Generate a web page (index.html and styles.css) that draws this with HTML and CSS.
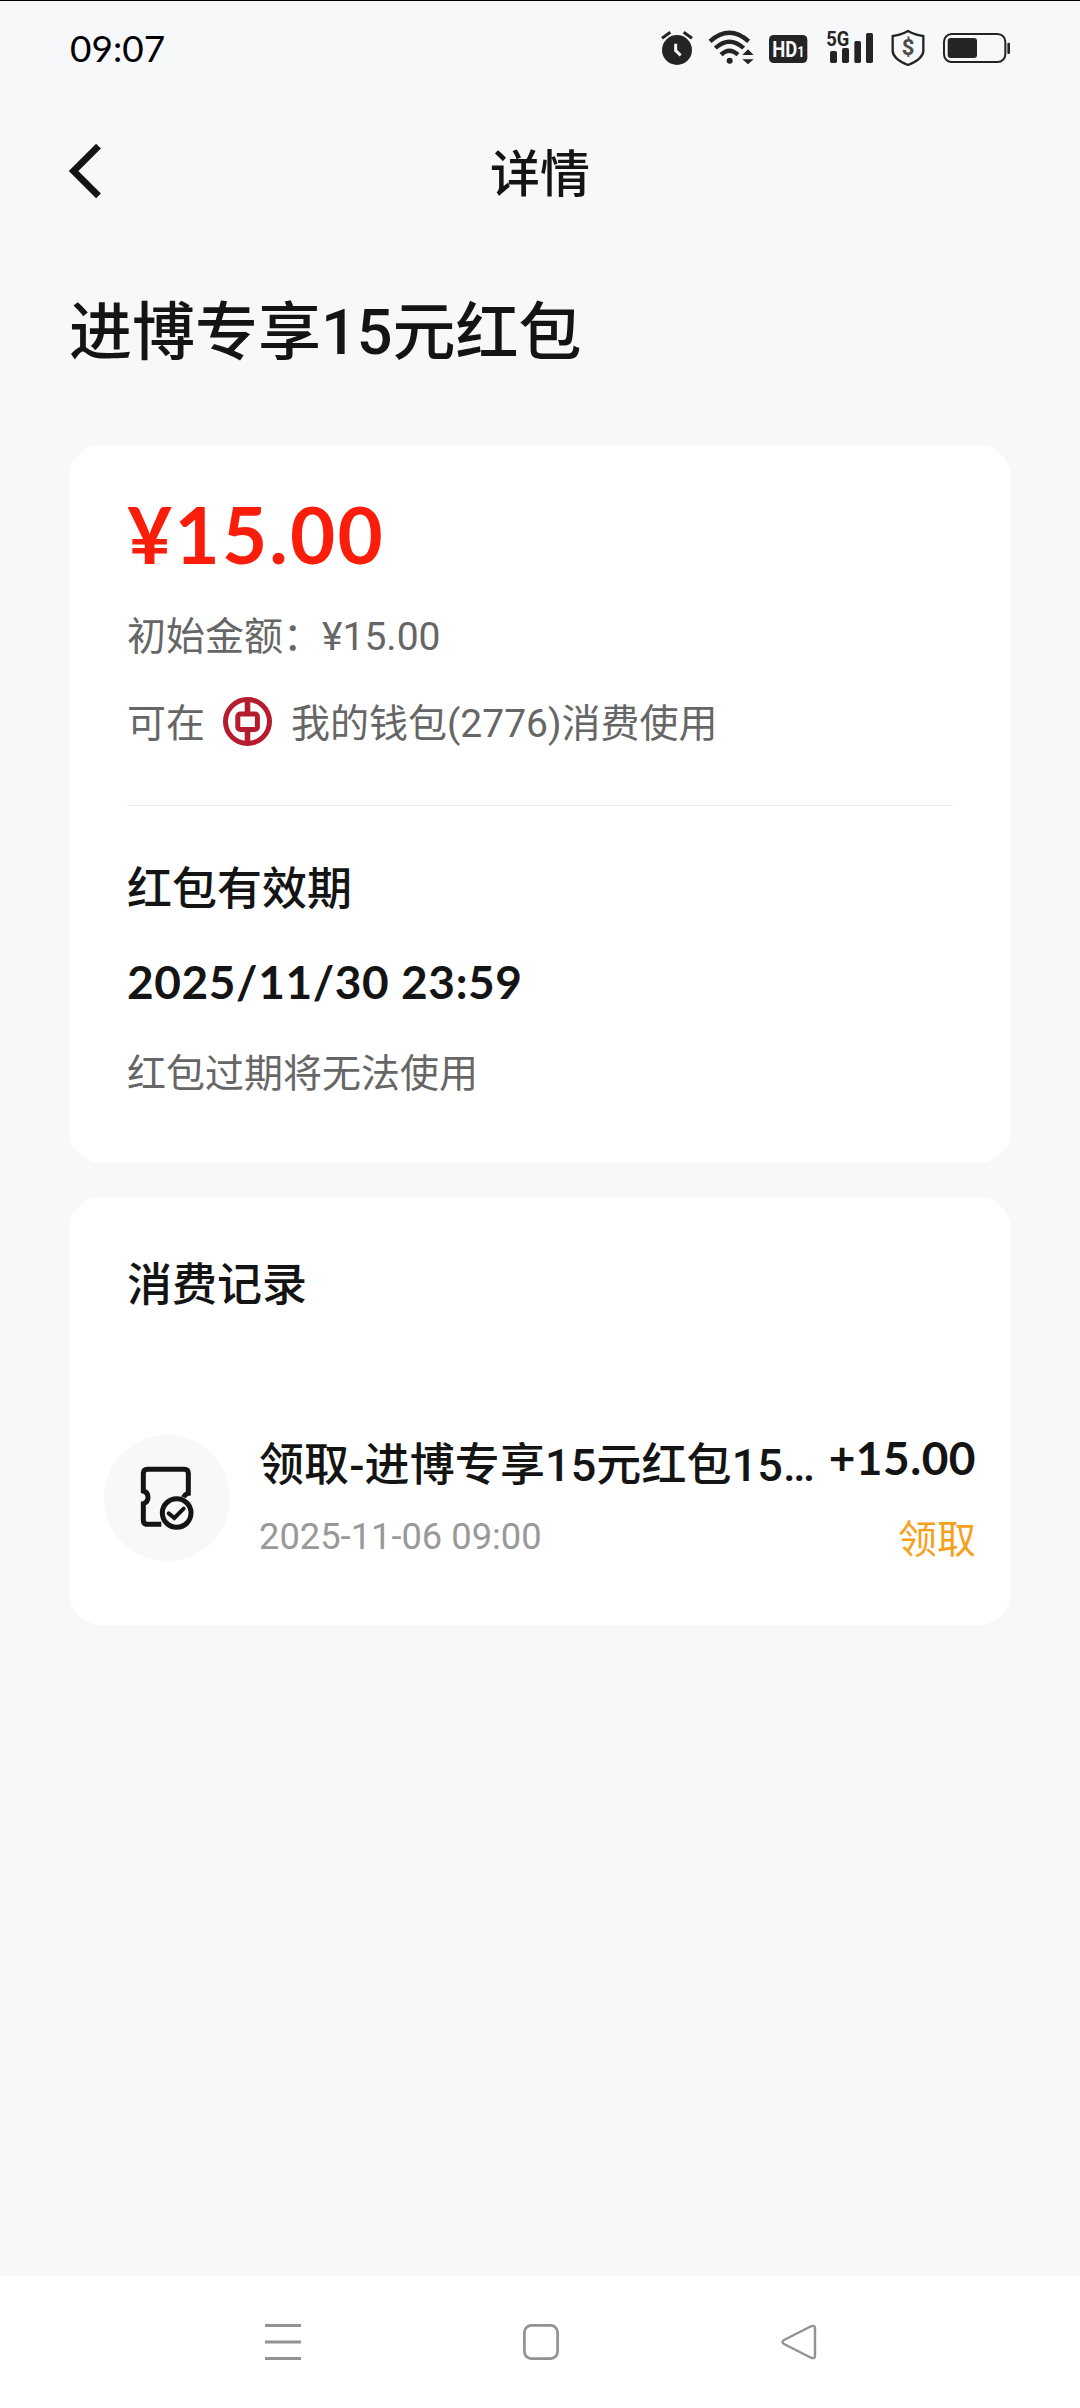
FILE: index.html
```html
<!DOCTYPE html>
<html lang="zh-CN">
<head>
<meta charset="utf-8">
<title>详情</title>
<link rel="stylesheet" href="styles.css">
</head>
<body>
<div class="screen">
  <div class="status-bar">
    <span class="clock">09:07</span>
    <div class="status-icons">
      <svg class="alarm" width="34" height="42" viewBox="60 51 102 126"><circle cx="111" cy="120" r="45" fill="#242424"/><path d="M66 85 91 67M131 67l25 18" stroke="#242424" stroke-width="9"/><path d="M107 101v21l15 14" fill="none" stroke="#f7f8fa" stroke-width="9"/></svg>
      <svg class="wifi" width="46" height="42" viewBox="204 51 138 126" fill="none" stroke="#242424"><path d="M210 94Q268 43 326 94" stroke-width="13"/><path d="M226 114Q268 76 311 114" stroke-width="13"/><path d="M243 134Q268 110 294 134" stroke-width="13"/><circle cx="269" cy="152" r="9" fill="#242424" stroke="none"/><path d="M307 135 324 118l17 17zM307 148h34l-17 15z" fill="#242424" stroke="none"/></svg>
      <svg class="hd" width="40" height="42" viewBox="384 51 120 126"><rect x="387" y="75" width="115" height="84" rx="14" fill="#242424"/><text class="badge" x="397" y="141" font-size="67" textLength="75" lengthAdjust="spacingAndGlyphs">HD</text><text class="badge" x="472" y="141" font-size="44" textLength="22" lengthAdjust="spacingAndGlyphs">1</text></svg>
      <svg class="signal" width="49" height="42" viewBox="555 51 147 126" fill="#242424"><text class="net" x="559" y="107" font-size="60" textLength="69" lengthAdjust="spacingAndGlyphs">5G</text><rect x="570" y="123" width="21" height="36" rx="5"/><rect x="606" y="114" width="21" height="45" rx="5"/><rect x="643" y="93" width="20" height="66" rx="5"/><rect x="678" y="69" width="21" height="90" rx="5"/></svg>
      <svg class="shield" width="36" height="42" viewBox="750 51 108 126"><path d="M804 63Q780 76 758 78v44q0 24 46 43 46-19 46-43V78Q828 76 804 63z" fill="none" stroke="#242424" stroke-width="7" stroke-linejoin="round"/><text class="dollar" x="804" y="136" font-size="66" text-anchor="middle">$</text></svg>
      <svg class="battery" width="69" height="42" viewBox="906 51 207 126"><rect x="912" y="72" width="184" height="84" rx="23" fill="none" stroke="#242424" stroke-width="6"/><rect x="923" y="84" width="88" height="60" rx="9" fill="#242424"/><rect x="1102" y="98" width="8" height="34" rx="4" fill="#242424"/></svg>
    </div>
  </div>

  <header class="nav-bar">
    <svg class="back" width="34" height="56" viewBox="0 0 34 56"><path d="M29.500 3.200 4.500 28l25 24.800" fill="none" stroke="#141414" stroke-width="6.800"/></svg>
    <h1 class="nav-title">详情</h1>
  </header>

  <main class="content">
    <h2 class="page-title">进博专享15元红包</h2>

    <section class="card detail-card">
      <div class="amount">¥15.00</div>
      <div class="initial">初始金额：<span>¥15.00</span></div>
      <div class="wallet">
        <span>可在</span>
        <svg class="bank" width="49" height="49" viewBox="0 0 49 49" fill="none" stroke="#b51c2e"><circle cx="24.5" cy="24.5" r="22" stroke-width="5"/><rect x="14.8" y="17" width="19.6" height="15.4" rx="2.5" stroke-width="5"/><path d="M24.5 3v14M24.5 32.5V46" stroke-width="5.6"/></svg>
        <span>我的钱包(2776)消费使用</span>
      </div>
      <hr class="divider">
      <h3 class="section-title">红包有效期</h3>
      <div class="expiry">2025/11/30 23:59</div>
      <div class="note">红包过期将无法使用</div>
    </section>

    <section class="card record-card">
      <h3 class="section-title">消费记录</h3>
      <div class="record">
        <div class="record-icon">
          <svg width="54" height="65" viewBox="270 1008 162 195" fill="none" stroke="#141414" stroke-width="15"><path d="M334 1183H292q-12 0-12-12v-50q14-4 14-19t-14-19v-53q0-12 12-12h111q12 0 12 12v60q-10 2-14 12"/><circle cx="380" cy="1149" r="43"/><path d="m356 1150 17 14 28-28" stroke-width="12" stroke-linecap="round"/></svg>
        </div>
        <div class="record-text">
          <div class="record-title">领取-进博专享15元红包15…</div>
          <div class="record-date">2025-11-06 09:00</div>
        </div>
        <div class="record-side">
          <div class="record-amount">+15.00</div>
          <div class="record-type">领取</div>
        </div>
      </div>
    </section>
  </main>

  <footer class="system-nav">
    <svg width="36" height="36" viewBox="0 0 36 36"><path d="M0 1.5h36M0 18h36M0 34.5h36" stroke="#929292" stroke-width="3"/></svg>
    <svg width="36" height="36" viewBox="0 0 36 36"><rect x="1.4" y="1.4" width="33.2" height="33.2" rx="7" fill="none" stroke="#929292" stroke-width="2.7"/></svg>
    <svg width="36" height="36" viewBox="0 0 36 36"><path d="M30 2.3 3 16q-3 2 0 4l27 13.7q4 1.5 4-2V4.3q0-3.5-4-2z" fill="none" stroke="#929292" stroke-width="2.4" stroke-linejoin="round"/></svg>
  </footer>
</div>
</body>
</html>
```

FILE: styles.css
```css
* { box-sizing: border-box; margin: 0; padding: 0; }

body {
  background: #f7f8fa;
  color: #141414;
  font-family: Roboto, "Noto Sans CJK SC", sans-serif;
}

svg { display: block; flex: none; }

.screen {
  display: flex;
  flex-direction: column;
  width: 1080px;
  height: 2408px;
  border-top: 1px solid #000;
}

/* Status bar */
.status-bar {
  display: flex;
  justify-content: space-between;
  align-items: center;
  height: 94px;
  padding: 0 69px 0 70px;
}

.clock {
  font-family: Lato, sans-serif;
  font-size: 37px;
  line-height: 44px;
  color: #000;
}

.status-icons { display: flex; gap: 14px; }
.signal { margin-left: 3px; }
.shield, .battery { margin-left: 2px; }

.badge, .net, .dollar { font-family: Roboto, sans-serif; font-weight: 700; }
.badge { fill: #f7f8fa; }
.net { fill: #242424; }
.dollar { fill: #4a4a4a; }

/* Title bar */
.nav-bar {
  display: grid;
  grid-template-columns: 34px 1fr 34px;
  align-items: center;
  height: 152px;
  padding: 0 69px;
}

.nav-title {
  font-size: 50px;
  line-height: 60px;
  font-weight: 500;
  text-align: center;
  padding-top: 7px;
}

.content { flex: 1; padding: 0 69px; }

.page-title {
  margin: 46px 0 73px;
  font-size: 63px;
  line-height: 79px;
  font-weight: 500;
}

/* Cards */
.card { background: #fff; border-radius: 33px; }

.detail-card { height: 718px; padding: 49px 58px 0; }

.amount {
  font-family: Lato, sans-serif;
  font-size: 78px;
  line-height: 80px;
  font-weight: 700;
  letter-spacing: 2.2px;
  color: #fa1e0a;
}

.initial, .wallet, .note {
  font-size: 39px;
  line-height: 54px;
  color: #666;
}

.initial { margin-top: 36px; }

.wallet { display: flex; align-items: center; height: 54px; margin-top: 33px; }
.bank { margin: 0 19px 6px 18px; }

.divider { height: 1px; margin: 54px 0; border: 0; background: #ececec; }

.section-title { font-size: 45px; line-height: 60px; font-weight: 500; }

.expiry {
  margin-top: 32px;
  font-family: Lato, sans-serif;
  font-size: 46px;
  line-height: 60px;
  font-weight: 700;
  letter-spacing: 0.6px;
}

.note { margin-top: 35px; }

.record-card { height: 428px; margin-top: 34px; padding: 59px 35px 0; }
.record-card .section-title { padding-left: 23px; }

.record { display: flex; margin-top: 119px; }

.record-icon {
  display: flex;
  align-items: center;
  justify-content: center;
  width: 126px;
  height: 126px;
  border-radius: 50%;
  background: #f7f8fa;
}

.record-text { flex: 1; margin-left: 29px; }

.record-title {
  padding-top: 1px;
  font-size: 45px;
  line-height: 60px;
  font-weight: 500;
  letter-spacing: 0.1px;
  white-space: nowrap;
}

.record-date { margin-top: 17px; font-size: 36.3px; line-height: 48px; color: #999; }

.record-side { margin-top: -7px; text-align: right; }

.record-amount {
  font-family: Lato, sans-serif;
  font-size: 46px;
  line-height: 60px;
  font-weight: 700;
  letter-spacing: 0.5px;
}

.record-type { margin-top: 25px; font-size: 39px; line-height: 54px; color: #f5a11c; }

/* System navigation */
.system-nav {
  display: flex;
  align-items: center;
  gap: 222px;
  height: 132px;
  padding-left: 265px;
  background: #fff;
}
```
